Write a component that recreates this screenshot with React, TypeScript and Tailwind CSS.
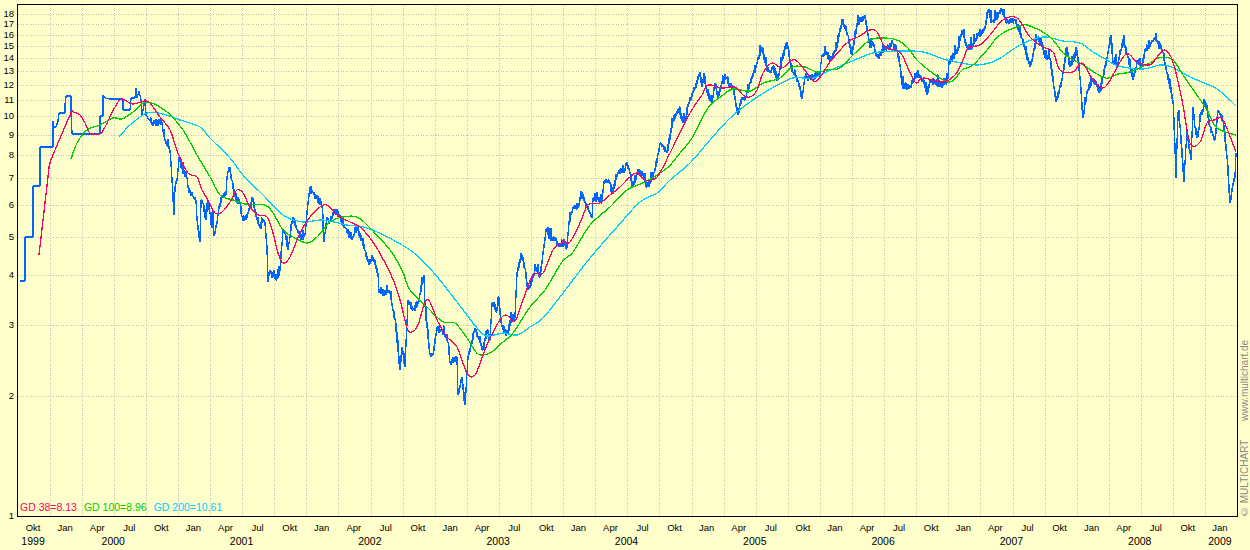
const FONT = "font-['Liberation_Sans',Arial,sans-serif]";

const PRICE_TICKS = [18, 17, 16, 15, 14, 13, 12, 11, 10, 9, 8, 7, 6, 5, 4, 3, 2];
const YEAR_CELLS = [
  { label: "1999", quarters: 1 },
  { label: "2000", quarters: 4 },
  { label: "2001", quarters: 4 },
  { label: "2002", quarters: 4 },
  { label: "2003", quarters: 4 },
  { label: "2004", quarters: 4 },
  { label: "2005", quarters: 4 },
  { label: "2006", quarters: 4 },
  { label: "2007", quarters: 4 },
  { label: "2008", quarters: 4 },
  { label: "2009", quarters: 1 },
];
const MONTHS = ["Okt", "Jan", "Apr", "Jul"];

function priceToY(price: number): number {
  return Math.round(516 - 120.3 * Math.log2(price));
}

// flat step part at the start of the chart, no daily noise there
const EARLY = [
  20, 281, 25, 281, 25, 237, 33, 237, 33, 186, 40, 186, 40, 147, 53, 147, 53, 121, 54, 127, 56, 127, 58, 121, 59, 113,
  65, 113, 65, 105, 66, 96, 71, 96, 71, 113, 72, 134, 100, 134, 100, 116, 103, 116, 103, 95, 105, 98, 110, 99, 123, 99,
  123, 110, 130, 110, 131, 98, 135, 98, 136, 88, 137, 98, 139, 91, 141, 100, 142, 116, 145, 99, 146, 115,
];

const PRICE = [
  150, 121, 155, 123, 162, 122, 163, 132, 165, 140, 170, 150, 171, 163, 172, 180, 174, 215, 175, 187, 177, 180, 179, 157,
  182, 168, 187, 177, 188, 187, 193, 197, 196, 200, 197, 220, 200, 242, 201, 200, 203, 203, 206, 220, 208, 200, 212, 228,
  213, 210, 214, 236, 217, 223, 219, 207, 222, 197, 226, 195, 227, 177, 229, 167, 232, 180, 235, 197, 240, 203, 242, 217,
  245, 220, 248, 213, 253, 198, 255, 210, 260, 228, 263, 220, 265, 223, 267, 247, 268, 282, 270, 270, 273, 277, 277, 278,
  280, 270, 283, 230, 285, 233, 288, 250, 290, 237, 293, 217, 297, 230, 302, 238, 305, 235, 307, 213, 310, 188, 313, 193,
  317, 197, 322, 205, 324, 242, 327, 217, 330, 222, 335, 210, 340, 217, 345, 227, 352, 240, 357, 227, 362, 240, 365, 250,
  368, 262, 373, 257, 378, 273, 379, 293, 390, 292, 393, 310, 395, 318, 400, 370, 402, 347, 405, 367, 408, 300, 413, 310,
  418, 303, 424, 275, 425, 307, 430, 355, 433, 355, 437, 328, 442, 330, 448, 342, 450, 363, 457, 357, 458, 395, 462, 377,
  465, 405, 468, 357, 475, 328, 478, 337, 483, 350, 487, 330, 490, 340, 492, 303, 497, 310, 498, 297, 502, 327, 507, 333,
  512, 318, 515, 317, 517, 273, 522, 255, 525, 268, 528, 290, 530, 287, 536, 267, 540, 277, 543, 253, 546, 230, 550, 237,
  555, 238, 558, 245, 565, 245, 567, 248, 569, 223, 573, 207, 579, 205, 582, 192, 585, 202, 590, 213, 592, 218, 593, 198,
  602, 200, 604, 182, 610, 182, 612, 193, 618, 173, 625, 170, 627, 162, 630, 173, 633, 187, 637, 173, 643, 173, 647, 187,
  650, 183, 655, 170, 660, 143, 667, 153, 673, 120, 678, 110, 685, 123, 688, 105, 695, 88, 700, 72, 702, 87, 704, 73,
  707, 93, 712, 103, 715, 83, 718, 98, 722, 83, 727, 77, 730, 87, 733, 87, 738, 115, 742, 97, 745, 100, 750, 83, 757, 63,
  762, 47, 765, 63, 770, 73, 773, 67, 778, 80, 782, 60, 787, 42, 790, 60, 793, 73, 798, 80, 802, 99, 805, 77, 813, 77,
  820, 73, 822, 55, 827, 53, 830, 62, 837, 47, 842, 20, 848, 35, 852, 55, 857, 25, 865, 15, 870, 48, 873, 42, 877, 57,
  887, 48, 893, 43, 897, 50, 900, 65, 902, 85, 910, 88, 917, 73, 923, 80, 927, 95, 930, 80, 943, 85, 948, 78, 949, 62,
  958, 50, 962, 30, 967, 48, 973, 45, 978, 35, 985, 28, 988, 10, 992, 22, 1002, 10, 1007, 22, 1015, 20, 1022, 38,
  1030, 67, 1037, 38, 1042, 42, 1045, 58, 1050, 58, 1056, 102, 1062, 80, 1067, 47, 1070, 67, 1077, 50, 1080, 77,
  1083, 118, 1087, 92, 1093, 78, 1100, 92, 1107, 58, 1111, 35, 1113, 63, 1118, 63, 1123, 40, 1128, 57, 1133, 80,
  1138, 60, 1142, 67, 1145, 50, 1155, 38, 1163, 52, 1167, 73, 1173, 100, 1175, 147, 1176, 178, 1178, 113, 1180, 125,
  1184, 182, 1187, 130, 1191, 160, 1193, 107, 1195, 128, 1198, 137, 1201, 113, 1206, 103, 1210, 127, 1215, 140,
  1218, 110, 1223, 120, 1227, 157, 1230, 203, 1233, 185, 1235, 177, 1236, 153,
];

const GD38 = [
  39, 255, 48, 177, 50, 163, 58, 143, 71, 113, 73, 112, 80, 115, 85, 123, 90, 133, 100, 134, 105, 127, 115, 107, 121, 99,
  128, 102, 133, 104, 145, 101, 150, 103, 160, 117, 170, 130, 178, 153, 188, 173, 197, 177, 202, 190, 208, 200, 215, 213,
  222, 212, 230, 202, 237, 190, 243, 193, 250, 207, 258, 215, 267, 217, 273, 233, 278, 253, 283, 263, 290, 257, 300, 233,
  310, 217, 320, 207, 327, 205, 337, 215, 350, 222, 360, 227, 370, 238, 378, 250, 392, 277, 400, 300, 407, 328, 412, 332,
  418, 325, 425, 302, 430, 302, 438, 322, 447, 337, 457, 347, 467, 373, 475, 375, 483, 355, 490, 338, 502, 317, 508, 316,
  515, 321, 523, 300, 533, 275, 543, 273, 553, 250, 563, 242, 570, 242, 580, 223, 588, 205, 600, 203, 610, 195, 620, 187,
  630, 177, 637, 173, 645, 180, 657, 177, 670, 153, 690, 113, 702, 95, 708, 85, 722, 88, 735, 87, 743, 95, 750, 97, 757, 90,
  763, 73, 772, 63, 782, 68, 792, 60, 798, 62, 807, 73, 815, 82, 823, 73, 830, 62, 848, 42, 858, 37, 870, 30, 877, 32,
  885, 47, 895, 50, 902, 55, 915, 82, 923, 78, 943, 82, 955, 75, 963, 60, 968, 48, 980, 45, 990, 35, 1003, 20, 1017, 18,
  1030, 37, 1043, 47, 1053, 52, 1060, 70, 1073, 72, 1082, 63, 1092, 78, 1105, 87, 1125, 55, 1137, 62, 1150, 65, 1157, 57,
  1165, 50, 1173, 62, 1182, 100, 1190, 143, 1200, 142, 1207, 123, 1215, 120, 1223, 120, 1236, 152,
];

const GD100 = [
  71, 159, 77, 143, 87, 130, 100, 125, 113, 118, 122, 119, 133, 112, 147, 102, 167, 112, 183, 130, 197, 155, 210, 177,
  220, 195, 233, 200, 245, 204, 265, 205, 273, 213, 283, 230, 293, 237, 307, 243, 317, 237, 330, 222, 343, 217, 357, 217,
  370, 228, 390, 250, 402, 270, 410, 290, 427, 307, 443, 322, 455, 323, 467, 338, 478, 354, 490, 353, 503, 342, 513, 333,
  530, 307, 545, 290, 562, 262, 573, 252, 590, 225, 610, 207, 627, 190, 645, 182, 667, 168, 680, 153, 692, 138, 708, 108,
  723, 95, 733, 89, 750, 91, 763, 83, 780, 78, 792, 67, 805, 67, 817, 72, 827, 70, 840, 68, 853, 55, 870, 40, 882, 38,
  897, 40, 908, 48, 920, 63, 948, 82, 962, 70, 973, 65, 987, 50, 1000, 35, 1020, 26, 1030, 26, 1050, 37, 1063, 53,
  1070, 58, 1083, 65, 1105, 78, 1118, 74, 1130, 72, 1150, 63, 1158, 58, 1172, 59, 1183, 75, 1205, 107, 1217, 128, 1236, 135,
];

const GD200 = [
  119, 137, 130, 125, 147, 113, 163, 114, 180, 120, 200, 127, 210, 138, 230, 158, 243, 175, 263, 195, 283, 215, 303, 222,
  323, 220, 347, 225, 370, 229, 410, 250, 433, 272, 457, 302, 477, 328, 487, 336, 503, 333, 517, 335, 530, 327, 543, 318,
  563, 293, 590, 258, 617, 227, 640, 202, 657, 193, 670, 180, 690, 163, 710, 140, 730, 118, 750, 102, 772, 88, 793, 78,
  813, 78, 833, 69, 850, 62, 873, 53, 897, 51, 923, 52, 947, 60, 977, 65, 997, 60, 1020, 45, 1043, 37, 1063, 41, 1080, 43,
  1093, 52, 1107, 60, 1118, 66, 1143, 69, 1160, 65, 1172, 67, 1190, 77, 1217, 89, 1236, 106,
];

function toPath(flat: number[]): string {
  let d = "";
  for (let i = 0; i < flat.length; i += 2) {
    d += `${i === 0 ? "M" : "L"}${flat[i]} ${flat[i + 1]}`;
  }
  return d;
}

// moving averages are smooth, so run a catmull-rom through the traced points
function smoothPath(flat: number[]): string {
  const at = (i: number) => {
    const k = Math.min(Math.max(i, 0), flat.length / 2 - 1);
    return [flat[k * 2], flat[k * 2 + 1]];
  };
  let d = `M${flat[0]} ${flat[1]}`;
  for (let i = 0; i < flat.length / 2 - 1; i++) {
    const [p0, p1, p2, p3] = [at(i - 1), at(i), at(i + 1), at(i + 2)];
    const c1x = p1[0] + (p2[0] - p0[0]) / 6;
    const c1y = p1[1] + (p2[1] - p0[1]) / 6;
    const c2x = p2[0] - (p3[0] - p1[0]) / 6;
    const c2y = p2[1] - (p3[1] - p1[1]) / 6;
    d += `C${c1x} ${c1y} ${c2x} ${c2y} ${p2[0]} ${p2[1]}`;
  }
  return d;
}

// the traced turning points get daily wiggle, so the line reads like a price series
function noisyPath(flat: number[]): string {
  let seed = 1999;
  const rand = () => {
    seed = (seed * 16807) % 2147483647;
    return seed / 2147483647;
  };
  let d = "";
  for (let i = 0; i < flat.length - 2; i += 2) {
    const [x0, y0, x1, y1] = [flat[i], flat[i + 1], flat[i + 2], flat[i + 3]];
    const steps = Math.max(1, Math.round(x1 - x0));
    for (let s = 1; s <= steps; s++) {
      const t = s / steps;
      const y = y0 + (y1 - y0) * t;
      const spike = rand() > 0.85 ? 5 : 0;
      const up = s === steps ? 0 : rand() * 4 + spike;
      const down = s === steps ? 0 : rand() * 4;
      d += `L${x0 + (x1 - x0) * t} ${y - up}V${y + down}`;
    }
  }
  return d;
}

const PRICE_PATH = toPath(EARLY) + "L150 121" + noisyPath(PRICE);

export default function App() {
  const gridX = Array.from({ length: 37 }, (_, i) => Math.round(49.5 + i * 32.1));
  const quarters = Array.from({ length: 38 }, (_, i) => MONTHS[i % 4]);

  return (
    <div className={`${FONT} h-[550px] w-[1250px] overflow-hidden bg-[#ffffcc] text-black`}>
      <div className="flex h-[517px] pt-1">
        <div className="relative w-[17px] shrink-0 text-[9.5px] leading-none">
          {[...PRICE_TICKS, 1].map((tick) => (
            <span
              key={tick}
              className="absolute right-[3px] -translate-y-1/2"
              style={{ top: priceToY(tick) - 4 }}
            >
              {tick}
            </span>
          ))}
        </div>

        <div className="relative h-[513px] w-[1221px] shrink-0 border border-black">
          <svg viewBox="18 5 1219 511" className="block h-[511px] w-[1219px]" fill="none">
            <g stroke="#c4c4b8" strokeDasharray="1 1.5" shapeRendering="crispEdges">
              {PRICE_TICKS.map((tick) => (
                <line key={tick} x1="18" x2="1237" y1={priceToY(tick) + 0.5} y2={priceToY(tick) + 0.5} />
              ))}
              {gridX.map((x) => (
                <line key={x} x1={x + 0.5} x2={x + 0.5} y1="5" y2="516" />
              ))}
            </g>
            <path d={PRICE_PATH} stroke="#0066ff" strokeWidth="1.4" strokeLinejoin="bevel" shapeRendering="crispEdges" />
            <path d={smoothPath(GD200)} stroke="#00ccff" strokeWidth="1.3" shapeRendering="crispEdges" />
            <path d={smoothPath(GD100)} stroke="#00cc00" strokeWidth="1.3" shapeRendering="crispEdges" />
            <path d={smoothPath(GD38)} stroke="#ff0066" strokeWidth="1.3" shapeRendering="crispEdges" />
          </svg>
          <div className="absolute bottom-[4px] left-[2px] flex gap-[7px] text-[10.5px] leading-none">
            <span className="text-[#ff0066]">GD 38=8.13</span>
            <span className="text-[#00cc00]">GD 100=8.96</span>
            <span className="text-[#00ccff]">GD 200=10.61</span>
          </div>
        </div>

        <div className="flex min-w-0 flex-1 rotate-180 items-start justify-start gap-[19px] pr-[2px] text-[10px] leading-none text-[#888888] [writing-mode:vertical-rl]">
          <span>© MULTICHART</span>
          <span>www.multichart.de</span>
        </div>
      </div>

      <div className="flex pt-[5px] pl-[17px] text-[9.5px] leading-[12px]">
        {quarters.map((month, i) => (
          <span key={i} className="w-[32.08px] shrink-0 text-center">
            {month}
          </span>
        ))}
      </div>
      <div className="flex pt-[1px] pl-[17px] text-[10.5px] leading-[13px]">
        {YEAR_CELLS.map((year) => (
          <span
            key={year.label}
            className={`shrink-0 text-center ${year.quarters === 1 ? "w-[32.08px]" : "w-[128.32px]"}`}
          >
            {year.label}
          </span>
        ))}
      </div>
    </div>
  );
}
